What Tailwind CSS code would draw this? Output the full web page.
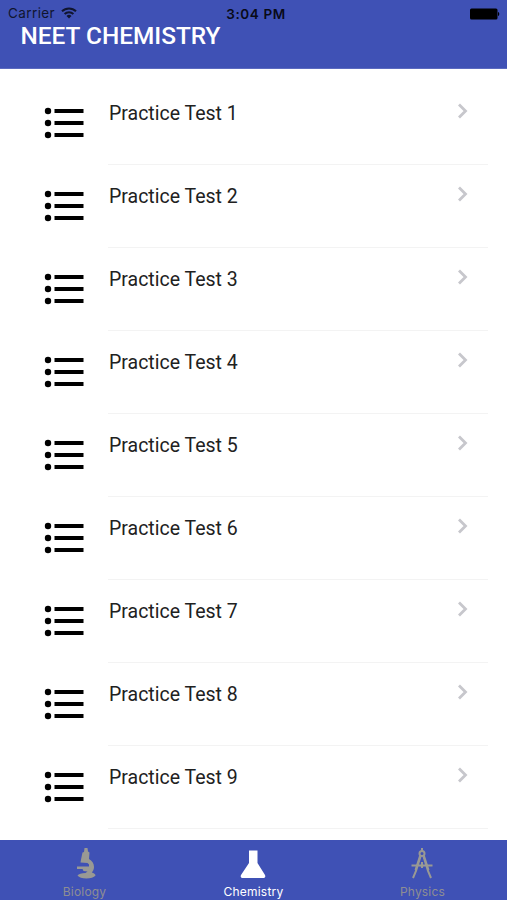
<!DOCTYPE html>
<html lang="en">
<head>
    <meta charset="UTF-8">
    <meta name="viewport" content="width=device-width, initial-scale=1.0">
    <title>NEET Chemistry</title>
    <script src="https://cdn.jsdelivr.net/npm/@tailwindcss/browser@4"></script>
</head>
<body class="bg-white">
    <div class="flex flex-col h-[900px] overflow-hidden font-['Roboto',sans-serif]">
        <header class="h-[69px] shrink-0 bg-[#3f51b5] border-b border-[#5b6abf]">
            <!-- Status bar -->
            <div class="grid grid-cols-3 items-center h-[27px] pl-2 pr-[7px] text-black font-['Inter',sans-serif]">
                <div class="flex items-center gap-1.5 text-[#10152f]">
                    <span class="mt-px text-[13.5px] leading-none tracking-[0.4px]">Carrier</span>
                    <svg class="w-4 h-3 -mt-px" viewBox="0 0 16 12" fill="none" stroke="currentColor" stroke-width="2">
                        <path d="M1 4.3a10 10 0 0 1 14 0M3.6 7a6.3 6.3 0 0 1 8.8 0"/>
                        <path d="M8 11.5 5.500 9a3.600 3.600 0 0 1 5 0z" fill="currentColor" stroke="none"/>
                    </svg>
                </div>
                <span class="pl-1 mt-0.5 text-center text-[13.5px] leading-none font-semibold tracking-[0.6px] text-[#080a18]">3:04 PM</span>
                <svg class="w-[30px] h-3 justify-self-end" viewBox="0 0 30 12">
                    <rect x="0" y="0.5" width="27.5" height="11" rx="1.5"/>
                    <path d="M28 4c1.700 .3 1.700 3.700 0 4z"/>
                </svg>
            </div>
            <h1 class="pl-[20.5px] -mt-[3px] text-[24.4px] leading-6 font-medium text-white">NEET CHEMISTRY</h1>
        </header>

        <main class="flex-1 overflow-hidden pt-[13px]">
            <ul id="testList"></ul>
        </main>

        <nav class="grid grid-cols-3 h-[60px] shrink-0 bg-[#3f51b5] font-['Inter',sans-serif] text-[12px] leading-4 tracking-[0.2px]">
            <a class="flex flex-col items-center pt-2 text-[#8e8e93]">
                <svg class="w-8 h-8" viewBox="0 0 32 32" fill="#999994">
                    <path d="M15.500 0h3l.5 3.500 1.500 1-.5 6.500c3 1.500 5 4.500 5 8 0 2-.8 4-2.200 5.500 2 .5 3.700 1.800 3.700 3-1.500 1.700-5 3-9 3-4.500 0-7.500-1.300-9-3 1-1.500 4-2.500 8-2.500l2-1.500-4-.5-1-2H8v-2.500h12v-2l-1.500-1.500-7-.5.5-3 1.500-7 1.500-.5z"/>
                </svg>
                <span class="mt-1">Biology</span>
            </a>
            <a class="flex flex-col items-center pt-2 text-white">
                <svg class="w-8 h-8 -ml-px" viewBox="0 0 32 32" fill="currentColor">
                    <path d="M12 2.500h8.500V15L28 27c.8 1.700 0 3-1.800 3H5.800C4 30 3.200 28.700 4 27l8-12z"/>
                </svg>
                <span class="mt-1">Chemistry</span>
            </a>
            <a class="flex flex-col items-center pt-2 text-[#8e8e93]">
                <svg class="w-8 h-8 -ml-px" viewBox="0 0 32 32" fill="none" stroke="#999994" stroke-width="2">
                    <path d="M16 0v3M14.500 8.500 10 23l-3 7M17.500 8.500 22 23l3 7M5.500 17.500h21M16 14v6"/>
                    <circle cx="16" cy="5.500" r="2.500"/>
                    <path d="m14 8-4.500 14M18 8l4.500 14"/>
                    <circle cx="16" cy="17.500" r="1.500" fill="#999994" stroke="none"/>
                </svg>
                <span class="mt-1">Physics</span>
            </a>
        </nav>
    </div>

    <script>
        const testList = document.getElementById('testList');
        const tests = Array.from({ length: 9 }, (_, i) => `Practice Test ${i + 1}`);

        testList.innerHTML = tests.map(name => `
            <li class="flex h-[83px] pl-11 pr-[19px]">
                <svg class="w-10 h-8 mt-[25px] mr-[24px] shrink-0" viewBox="0 0 40 32">
                    <circle cx="4" cy="4" r="3.200"/>
                    <circle cx="4" cy="16" r="3.200"/>
                    <circle cx="4" cy="28" r="3.200"/>
                    <path d="M10.500 4h29M10.500 16h29M10.500 28h29" stroke="black" stroke-width="4"/>
                </svg>
                <div class="flex flex-1 justify-between pl-px pr-5 border-b border-[#f3f3f3]">
                    <span class="mt-5 text-[19.5px] leading-6 text-[#212121]">${name}</span>
                    <svg class="w-[11px] h-4 mt-[21px]" viewBox="0 0 11 16" fill="none" stroke="#c7c7cc" stroke-width="2.800">
                        <path d="m2 1.500 6.500 6.500L2 14.500"/>
                    </svg>
                </div>
            </li>
        `).join('');
    </script>
</body>
</html>
